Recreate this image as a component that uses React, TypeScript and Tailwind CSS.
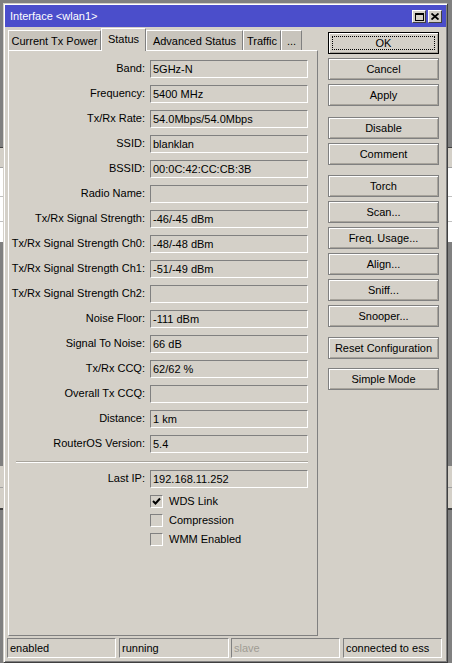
import type { ReactNode } from 'react';

const rows: [string, string][] = [
  ['Band', '5GHz-N'],
  ['Frequency', '5400 MHz'],
  ['Tx/Rx Rate', '54.0Mbps/54.0Mbps'],
  ['SSID', 'blanklan'],
  ['BSSID', '00:0C:42:CC:CB:3B'],
  ['Radio Name', ''],
  ['Tx/Rx Signal Strength', '-46/-45 dBm'],
  ['Tx/Rx Signal Strength Ch0', '-48/-48 dBm'],
  ['Tx/Rx Signal Strength Ch1', '-51/-49 dBm'],
  ['Tx/Rx Signal Strength Ch2', ''],
  ['Noise Floor', '-111 dBm'],
  ['Signal To Noise', '66 dB'],
  ['Tx/Rx CCQ', '62/62 %'],
  ['Overall Tx CCQ', ''],
  ['Distance', '1 km'],
  ['RouterOS Version', '5.4'],
];

const tabs = [
  { name: 'Current Tx Power', w: 'w-[93px]' },
  { name: 'Status', w: 'w-[45px]', active: true },
  { name: 'Advanced Status', w: 'w-[97px]' },
  { name: 'Traffic', w: 'w-[38px]' },
  { name: '...', w: 'w-[21px]' },
];

function Field({ label, value }: { label: string; value: string }) {
  return (
    <div className="flex items-center h-[25px]">
      <span className="w-[141px] pr-[5px] text-right whitespace-nowrap">{label}:</span>
      <div className="w-[158px] h-[18px] border border-t-[#808080] border-l-[#808080] border-r-white border-b-white pl-[2px] leading-[16px]">
        {value}
      </div>
    </div>
  );
}

function Check({ label, checked }: { label: string; checked?: boolean }) {
  return (
    <div className="flex items-center h-[19px] pl-[141px] gap-[6px]">
      <div className="w-[13px] h-[13px] border border-t-[#808080] border-l-[#808080] border-r-white border-b-white flex items-center justify-center">
        {checked && (
          <svg width="9" height="9" viewBox="0 0 9 9">
            <path d="M1 4 L3.5 6.5 L8 1.5" stroke="#000" strokeWidth="2" fill="none" />
          </svg>
        )}
      </div>
      <span>{label}</span>
    </div>
  );
}

function Btn({ children, focused }: { children: ReactNode; focused?: boolean }) {
  return (
    <div
      className={`relative h-[22px] w-full flex items-center justify-center bg-[#d4d0c8] border shadow-[inset_1px_1px_0_#fff,inset_-1px_-1px_0_#a8a49c] ${
        focused ? 'border-black' : 'border-[#808080]'
      }`}
    >
      {focused && <div className="absolute inset-[3px] border border-dotted border-black" />}
      {children}
    </div>
  );
}

function Cell({ children, w, dim }: { children: ReactNode; w: string; dim?: boolean }) {
  return (
    <div
      className={`${w} h-[20px] border border-t-[#808080] border-l-[#808080] border-r-white border-b-white pl-[2px] leading-[18px] ${
        dim ? 'text-[#a09c94]' : 'text-black'
      }`}
    >
      {children}
    </div>
  );
}

export default function App() {
  return (
    <div className="relative w-[452px] h-[663px] overflow-hidden bg-[#808080] font-['Liberation_Sans',Arial,sans-serif] text-[11px] text-black">
      {/* windows lying behind the dialog */}
      <div className="absolute left-0 right-0 top-[147px] h-[95px] bg-white border-t border-[#404040]">
        <div className="h-[20px] bg-[#d4d0c8] border-b border-[#a0a0a0]" />
        <div className="h-[29px] border-b border-[#c0c0c0]" />
        <div className="h-[25px] border-b border-[#c0c0c0]" />
      </div>
      <div className="absolute left-0 right-0 top-[466px] h-[44px] bg-[#d4d0c8] border-b-2 border-[#404040]">
        <div className="h-[22px] border-b border-[#a0a0a0]" />
      </div>

      {/* dialog */}
      <div className="absolute left-[3px] top-[3px] w-[445px] h-[660px] flex flex-col bg-[#d4d0c8] border border-t-[#d4d0c8] border-l-[#d4d0c8] border-r-[#404040] border-b-[#404040] p-px shadow-[inset_1px_1px_0_#fff,inset_-1px_-1px_0_#808080]">
        <div className="h-[22px] shrink-0 bg-[#4b4ecb] flex items-center pl-[5px] pr-[4px]">
          <span className="text-white text-[11px]">Interface &lt;wlan1&gt;</span>
          <div className="ml-auto flex gap-[2px] pt-px">
            <div className="w-[14px] h-[13px] bg-[#d4d0c8] border border-t-white border-l-white border-r-[#404040] border-b-[#404040] flex items-center justify-center">
              <div className="w-[9px] h-[8px] border border-black border-t-2" />
            </div>
            <div className="w-[14px] h-[13px] bg-[#d4d0c8] border border-t-white border-l-white border-r-[#404040] border-b-[#404040] flex items-center justify-center">
              <svg width="8" height="7" viewBox="0 0 8 7">
                <path d="M0.5 0.5 L7.5 6.5 M7.5 0.5 L0.5 6.5" stroke="#000" strokeWidth="1.8" />
              </svg>
            </div>
          </div>
        </div>

        <div className="flex-1 flex pl-[3px] gap-[10px] min-h-0">
          <div className="w-[310px] flex flex-col">
            <div className="h-[23px] flex items-end shrink-0">
              {tabs.map((t) =>
                t.active ? (
                  <div
                    key={t.name}
                    className={`${t.w} h-[23px] -mb-px relative z-10 bg-[#d4d0c8] border-t border-l border-r border-t-white border-l-white border-r-[#808080] text-center leading-[20px]`}
                  >
                    {t.name}
                  </div>
                ) : (
                  <div
                    key={t.name}
                    className={`${t.w} h-[20px] bg-[#c8c4bc] border-t border-l border-r border-t-white border-l-white border-r-[#808080] text-center leading-[20px] whitespace-nowrap overflow-hidden`}
                  >
                    {t.name}
                  </div>
                )
              )}
            </div>
            <div className="flex-1 border border-t-white border-l-white border-r-[#808080] border-b-[#808080] pt-[5px]">
              {rows.map(([l, v]) => (
                <Field key={l} label={l} value={v} />
              ))}
              <div className="mt-[5px] ml-[7px] w-[292px] border-t border-b border-t-[#a8a49c] border-b-white" />
              <div className="mt-[3px]">
                <Field label="Last IP" value="192.168.11.252" />
              </div>
              <div className="mt-px">
                <Check label="WDS Link" checked />
                <Check label="Compression" />
                <Check label="WMM Enabled" />
              </div>
            </div>
          </div>

          <div className="w-[111px] pt-[5px] flex flex-col">
            <div className="flex flex-col gap-[4px]">
              <Btn focused>OK</Btn>
              <Btn>Cancel</Btn>
              <Btn>Apply</Btn>
            </div>
            <div className="flex flex-col gap-[4px] mt-[11px]">
              <Btn>Disable</Btn>
              <Btn>Comment</Btn>
            </div>
            <div className="flex flex-col gap-[4px] mt-[10px]">
              <Btn>Torch</Btn>
              <Btn>Scan...</Btn>
              <Btn>Freq. Usage...</Btn>
              <Btn>Align...</Btn>
              <Btn>Sniff...</Btn>
              <Btn>Snooper...</Btn>
            </div>
            <div className="flex flex-col gap-[9px] mt-[10px]">
              <Btn>Reset Configuration</Btn>
              <Btn>Simple Mode</Btn>
            </div>
          </div>
        </div>

        <div className="shrink-0 flex pl-[2px] mt-[2px] mb-[3px]">
          <Cell w="w-[109px]">enabled</Cell>
          <div className="w-[3px]" />
          <Cell w="w-[110px]">running</Cell>
          <div className="w-[2px]" />
          <Cell w="w-[109px]" dim>
            slave
          </Cell>
          <div className="w-[3px]" />
          <Cell w="w-[99px]">connected to ess</Cell>
        </div>
      </div>
    </div>
  );
}
